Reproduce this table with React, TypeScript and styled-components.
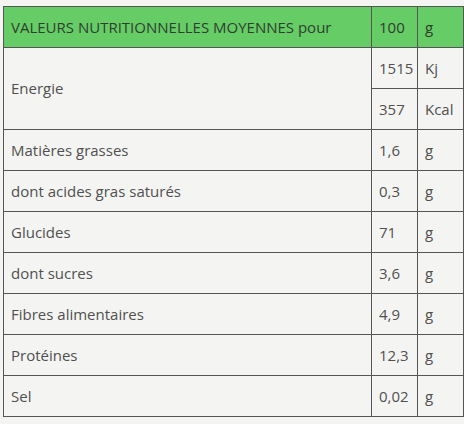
import React from 'react';
import styled, { createGlobalStyle } from 'styled-components';

const GlobalStyle = createGlobalStyle`
  body {
    margin: 0;
    background: #f4f5f2;
    font-family: 'Open Sans', 'Noto Sans', sans-serif;
  }
`;

const Wrapper = styled.div`
  padding: 6px 1px 0 3px;
`;

const Table = styled.table`
  width: 460px;
  border-collapse: collapse;
  table-layout: fixed;
  font-size: 15px;
`;

const Row = styled.tr<{ $head?: boolean }>`
  height: 41px;
  background: ${(p) => (p.$head ? '#66cc66' : 'transparent')};
  color: ${(p) => (p.$head ? '#2f3f2f' : '#505050')};
`;

const Cell = styled.td`
  border: 1px solid #555;
  padding: 0 6px 1px 7px;
  vertical-align: middle;
  white-space: nowrap;
`;

type Item = [string, string, string];

const ROWS: Item[] = [
  ['Matières grasses', '1,6', 'g'],
  ['dont acides gras saturés', '0,3', 'g'],
  ['Glucides', '71', 'g'],
  ['dont sucres', '3,6', 'g'],
  ['Fibres alimentaires', '4,9', 'g'],
  ['Protéines', '12,3', 'g'],
  ['Sel', '0,02', 'g'],
];

const App = () => (
  <Wrapper>
    <GlobalStyle />
    <Table>
      <colgroup>
        <col style={{ width: 368 }} />
        <col style={{ width: 46 }} />
        <col style={{ width: 46 }} />
      </colgroup>
      <tbody>
        <Row $head>
          <Cell>VALEURS NUTRITIONNELLES MOYENNES pour</Cell>
          <Cell>100</Cell>
          <Cell>g</Cell>
        </Row>
        <Row>
          <Cell rowSpan={2}>Energie</Cell>
          <Cell>1515</Cell>
          <Cell>Kj</Cell>
        </Row>
        <Row>
          <Cell>357</Cell>
          <Cell>Kcal</Cell>
        </Row>
        {ROWS.map(([label, value, unit]) => (
          <Row key={label}>
            <Cell>{label}</Cell>
            <Cell>{value}</Cell>
            <Cell>{unit}</Cell>
          </Row>
        ))}
      </tbody>
    </Table>
  </Wrapper>
);

export default App;
